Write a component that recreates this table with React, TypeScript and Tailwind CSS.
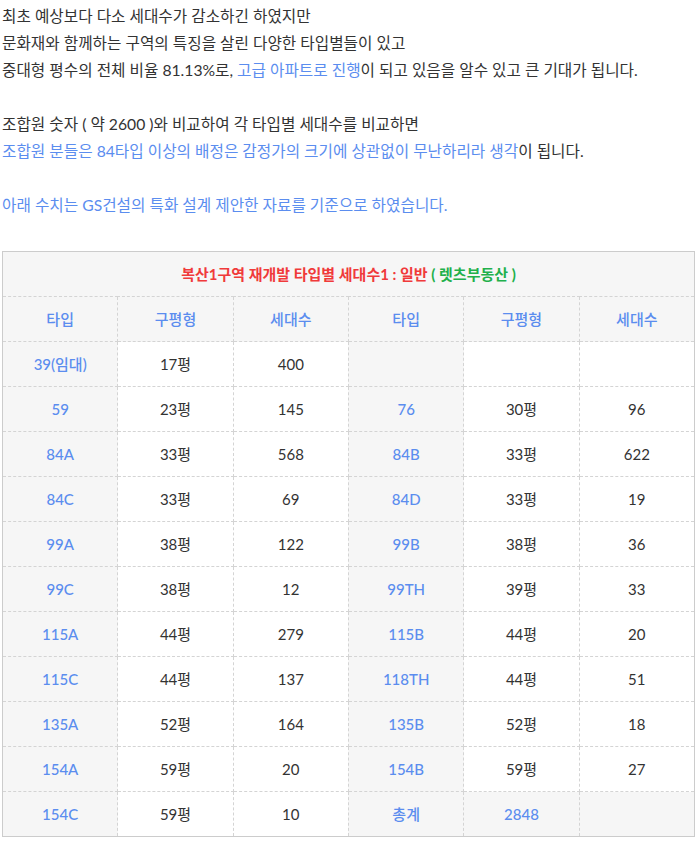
import React from 'react';

const rows: [string, string, string, string, string, string][] = [
  ['39(임대)', '17평', '400', '', '', ''],
  ['59', '23평', '145', '76', '30평', '96'],
  ['84A', '33평', '568', '84B', '33평', '622'],
  ['84C', '33평', '69', '84D', '33평', '19'],
  ['99A', '38평', '122', '99B', '38평', '36'],
  ['99C', '38평', '12', '99TH', '39평', '33'],
  ['115A', '44평', '279', '115B', '44평', '20'],
  ['115C', '44평', '137', '118TH', '44평', '51'],
  ['135A', '52평', '164', '135B', '52평', '18'],
  ['154A', '59평', '20', '154B', '59평', '27'],
];

const cell = 'h-[45px] border border-dashed border-[#d4d4d4] text-center align-middle p-0 text-[15px]';
const typeCell = `${cell} bg-[#f6f6f6] text-[#5b8def] font-medium`;
const dataCell = `${cell} bg-white text-[#333]`;

const App: React.FC = () => {
  return (
    <div
      className="px-[2px] pt-[3px] pb-2 text-[15.7px] leading-[27px] text-[#333]"
      style={{ fontFamily: 'Lato, "Noto Sans CJK KR", sans-serif' }}
    >
      <p>최초 예상보다 다소 세대수가 감소하긴 하였지만</p>
      <p>문화재와 함께하는 구역의 특징을 살린 다양한 타입별들이 있고</p>
      <p>
        중대형 평수의 전체 비율 81.13%로, <span className="text-[#5b8def]">고급 아파트로 진행</span>이 되고 있음을 알수 있고 큰 기대가 됩니다.
      </p>
      <p>&nbsp;</p>
      <p>조합원 숫자 ( 약 2600 )와 비교하여 각 타입별 세대수를 비교하면</p>
      <p>
        <span className="text-[#5b8def]">조합원 분들은 84타입 이상의 배정은 감정가의 크기에 상관없이 무난하리라 생각</span>이 됩니다.
      </p>
      <p>&nbsp;</p>
      <p className="text-[#5b8def]">아래 수치는 GS건설의 특화 설계 제안한 자료를 기준으로 하였습니다.</p>

      <table className="mt-[32px] w-full table-fixed border-collapse border border-solid border-[#cccccc]">
        <tbody>
          <tr>
            <td colSpan={6} className={`${cell} bg-[#f6f6f6] font-bold`}>
              <span className="text-[#f03a3a]">복산1구역 재개발 타입별 세대수1 : 일반 </span>
              <span className="text-[#21b04b]">( 렛츠부동산 )</span>
            </td>
          </tr>
          <tr>
            {['타입', '구평형', '세대수', '타입', '구평형', '세대수'].map((h, i) => (
              <td key={i} className={`${cell} bg-[#f6f6f6] text-[#5b8def] font-medium`}>
                {h}
              </td>
            ))}
          </tr>
          {rows.map((r, i) => (
            <tr key={i}>
              <td className={typeCell}>{r[0]}</td>
              <td className={dataCell}>{r[1]}</td>
              <td className={dataCell}>{r[2]}</td>
              <td className={typeCell}>{r[3]}</td>
              <td className={dataCell}>{r[4]}</td>
              <td className={dataCell}>{r[5]}</td>
            </tr>
          ))}
          <tr>
            <td className={typeCell}>154C</td>
            <td className={dataCell}>59평</td>
            <td className={dataCell}>10</td>
            <td className={typeCell}>총계</td>
            <td className={typeCell}>2848</td>
            <td className={typeCell}></td>
          </tr>
        </tbody>
      </table>
    </div>
  );
};

export default App;
